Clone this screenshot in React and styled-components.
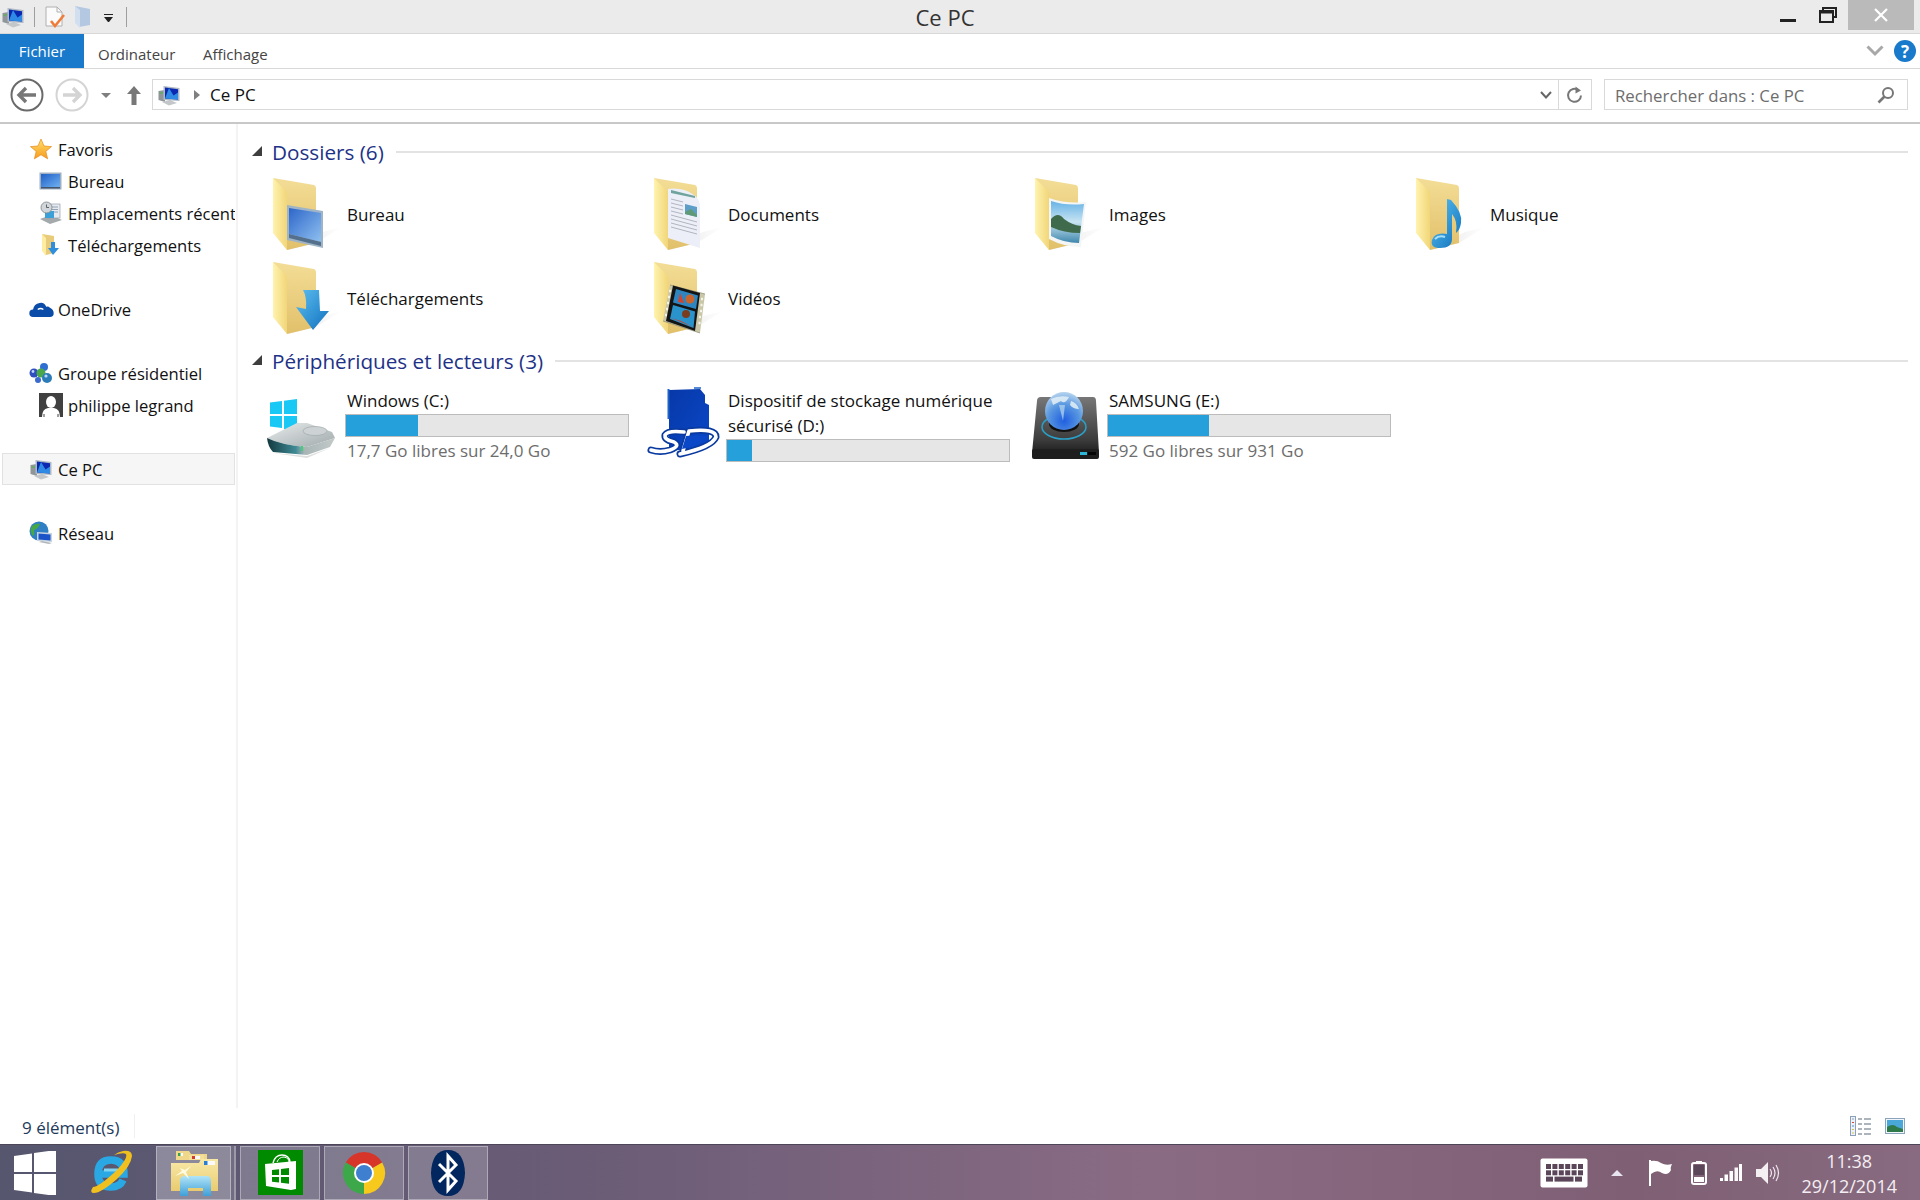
import React from 'react';
import styled, { createGlobalStyle } from 'styled-components';

function FolderBase({ id, children }) {
	return (
		<FolderSvg viewBox="0 0 72 84" width="72" height="84">
			<defs>
				<linearGradient id={`${id}b`} x1="0" y1="0" x2="0" y2="1">
					<stop offset="0" stopColor="#f3dd96" />
					<stop offset="1" stopColor="#e2c06a" />
				</linearGradient>
				<linearGradient id={`${id}f`} x1="0" y1="0" x2="1" y2="0">
					<stop offset="0" stopColor="#fff3ae" />
					<stop offset="1" stopColor="#f1d679" />
				</linearGradient>
				<linearGradient id={`${id}s`} x1="0" y1="0" x2="1" y2="0">
					<stop offset="0" stopColor="#cfcfcf" />
					<stop offset="1" stopColor="#ffffff" />
				</linearGradient>
			</defs>
			<path d="M15 73 L44 66 L70 50 L50 55 Z" fill={`url(#${id}s)`} opacity="0.55" />
			<path d="M1 1 L42 8 Q44 9 44 11 V66 L15 73 Z" fill={`url(#${id}b)`} />
			<path d="M1 1 L14 14 Q15 15 15 17 V73 L1 56 Z" fill={`url(#${id}f)`} />
			{children}
		</FolderSvg>
	);
}

function DesktopFolder() {
	return (
		<FolderBase id="fd">
			<defs>
				<linearGradient id="fdm" x1="0" y1="0" x2="1" y2="1">
					<stop offset="0" stopColor="#2d66c9" />
					<stop offset="1" stopColor="#8fc0f0" />
				</linearGradient>
			</defs>
			<path d="M15 28 L51 34 V71 L15 63 Z" fill="#9fb4c6" />
			<path d="M17 31 L49 36 V65 L17 57 Z" fill="url(#fdm)" />
			<path d="M17 57 L49 65 V69 L17 61 Z" fill="#54708c" />
		</FolderBase>
	);
}

function DocumentsFolder() {
	return (
		<FolderBase id="fc">
			<path d="M15 12 Q30 10 41 18 Q47 22 47 30 V71 L15 61 Z" fill="#eceef8" />
			<path d="M18 13 L42 19 V21 L18 16 Z" fill="#6fa39d" />
			<g stroke="#b2b4c0" strokeWidth="1">
				<path d="M18 22 L30 25 M18 26 L30 29 M18 30 L30 33 M18 34 L30 37 M18 38 L44 45 M18 42 L44 49 M18 46 L44 53 M18 50 L44 57" />
			</g>
			<path d="M32 27 L44 30 V40 L32 37 Z" fill="#5d9ec9" />
			<path d="M32 35 L38 32 L44 38 V40 L32 37 Z" fill="#5f9a78" />
		</FolderBase>
	);
}

function PicturesFolder() {
	return (
		<FolderBase id="fi">
			<defs>
				<linearGradient id="fip" x1="0" y1="0" x2="0" y2="1">
					<stop offset="0" stopColor="#66b2e6" />
					<stop offset="0.5" stopColor="#c8e4f2" />
					<stop offset="1" stopColor="#3f86ad" />
				</linearGradient>
			</defs>
			<path d="M15 21 Q32 27 52 25 L47 70 Q30 70 15 62 Z" fill="#f4f6f6" />
			<path d="M17 24 Q32 29 50 27 L45 66 Q30 66 17 59 Z" fill="url(#fip)" />
			<path d="M17 42 Q24 34 30 42 Q38 48 47 49 L46 56 Q30 56 17 50 Z" fill="#3f6a4c" />
		</FolderBase>
	);
}

function MusicFolder() {
	return (
		<FolderBase id="fm">
			<defs>
				<linearGradient id="fmn" x1="0" y1="0" x2="1" y2="1">
					<stop offset="0" stopColor="#5cc4f2" />
					<stop offset="1" stopColor="#0f6fbb" />
				</linearGradient>
			</defs>
			<path d="M32 22 L36 23 Q48 36 46 46 Q45 53 41 56 Q43 44 37 37 V62 Q37 71 25 71 Q15 71 17 63 Q20 55 32 57 Z" fill="url(#fmn)" />
			<path d="M20 62 Q24 58 30 60" stroke="#a8e0f8" strokeWidth="2" fill="none" />
		</FolderBase>
	);
}

function DownloadsFolder() {
	return (
		<FolderBase id="fl">
			<defs>
				<linearGradient id="fla" x1="0" y1="0" x2="1" y2="1">
					<stop offset="0" stopColor="#5fc0f0" />
					<stop offset="1" stopColor="#0f70c0" />
				</linearGradient>
			</defs>
			<path d="M31 29 L47 29 L48 50 L57 50 L41 69 L24 46 L34 48 Q35 36 31 29 Z" fill="url(#fla)" />
		</FolderBase>
	);
}

function VideosFolder() {
	return (
		<FolderBase id="fv">
			<path d="M17 24 L52 33 L47 72 L10 60 Z" fill="#c9c7a8" />
			<path d="M17 24 L52 33 M10 60 L47 72" stroke="#8a8870" strokeWidth="0.7" />
			<path d="M20 24.5 L47 32 L42 70 L13 60 Z" fill="#141414" />
			<path d="M16 30 L18 30 M15 36 L17 36 M14 42 L16 42 M13 48 L15 48 M12 54 L14 54 M48 38 L50 38 M47.5 44 L49.5 44 M47 50 L49 50 M46 56 L48 56 M45.5 62 L47.5 62" stroke="#f4f4e8" strokeWidth="2.4" />
			<path d="M23 28 L45 34.5 L43 48 L20 41.5 Z" fill="#2d86c2" />
			<path d="M20 44 L42 50.5 L40.5 67 L17 58 Z" fill="#2b93cc" />
			<circle cx="37" cy="38" r="4.5" fill="#c9642c" />
			<circle cx="33" cy="53" r="4" fill="#7a3d20" />
			<path d="M25 41 L27 32 L31 42 Z" fill="#d8402a" />
			<path d="M18 57 L28 60 L40 66 Z" fill="#c8402a" />
		</FolderBase>
	);
}

function WindowsDrive() {
	return (
		<DriveSvg viewBox="0 0 84 88" width="84" height="88">
			<defs>
				<linearGradient id="hddt" x1="0" y1="0" x2="1" y2="1">
					<stop offset="0" stopColor="#e8ecec" />
					<stop offset="1" stopColor="#a0a9ab" />
				</linearGradient>
				<linearGradient id="hddf" x1="0" y1="0" x2="1" y2="0">
					<stop offset="0" stopColor="#12383f" />
					<stop offset="0.42" stopColor="#3f8a94" />
					<stop offset="0.55" stopColor="#a9b5b5" />
					<stop offset="1" stopColor="#c2c9c9" />
				</linearGradient>
			</defs>
			<path d="M9 25.5 L21 24 V37 H9 Z M23 23.7 L36 22 V37 H23 Z M9 39 H21 V51 L9 49.5 Z M23 39 H36 V54 L23 52 Z" fill="#19c8f4" />
			<path d="M6 61 L36 46 H46 L71 55 L74 61 L46 70 Q20 68 6 61 Z" fill="url(#hddt)" />
			<path d="M6 61 Q20 68 46 70 L74 61 L69 70 L46 78 L12 75 Q7 70 6 61 Z" fill="url(#hddf)" />
			<ellipse cx="54" cy="54" rx="12" ry="4.5" fill="#cdd3d4" stroke="#9aa2a4" strokeWidth="0.6" />
			<rect x="40" y="69" width="2" height="5" fill="#3fd07a" />
			<path d="M12 76 L46 79 L69 71 L46 81 Z" fill="#c8c8c8" opacity="0.6" />
		</DriveSvg>
	);
}

function SdDrive() {
	return (
		<DriveSvg viewBox="0 0 84 88" width="84" height="88">
			<defs>
				<linearGradient id="sdc" x1="0" y1="0" x2="1" y2="1">
					<stop offset="0" stopColor="#0738a8" />
					<stop offset="1" stopColor="#0a48c8" />
				</linearGradient>
			</defs>
			<path d="M27 13 L58 12 L63 18 V26 L67 28 V70 L27 74 Z" fill="url(#sdc)" />
			<path d="M26.5 12 V42" stroke="#1f62c8" strokeWidth="2" fill="none" />
			<path d="M52 11 L59 11" stroke="#1f62c8" strokeWidth="1.5" />
			<g fill="none" strokeLinecap="round" strokeLinejoin="round">
				<path d="M42 55 Q26 53 23 58 Q22 63 32 65 Q39 69 28 73 Q18 76 9 73" stroke="#0a3aa0" strokeWidth="7" />
				<path d="M47 54 L41 74 M47 54 Q74 51 74 60 Q70 70 38 77" stroke="#0a3aa0" strokeWidth="7" />
				<path d="M42 55 Q26 53 23 58 Q22 63 32 65 Q39 69 28 73 Q18 76 9 73" stroke="#ffffff" strokeWidth="3.6" />
				<path d="M47 54 L41 74 M47 54 Q74 51 74 60 Q70 70 38 77" stroke="#ffffff" strokeWidth="3.6" />
			</g>
			<path d="M44 59 L40 72 Q60 68 66 60 Q62 57 44 59 Z" fill="#0a48c8" />
		</DriveSvg>
	);
}

function SamsungDrive() {
	return (
		<DriveSvg viewBox="0 0 84 88" width="84" height="88">
			<defs>
				<linearGradient id="sab" x1="0" y1="0" x2="0" y2="1">
					<stop offset="0" stopColor="#777777" />
					<stop offset="0.7" stopColor="#3b3b3b" />
					<stop offset="1" stopColor="#111111" />
				</linearGradient>
				<radialGradient id="sag" cx="0.5" cy="0.75" r="0.85">
					<stop offset="0" stopColor="#1f5ee0" />
					<stop offset="0.5" stopColor="#5a98e0" />
					<stop offset="1" stopColor="#d2e6f2" />
				</radialGradient>
			</defs>
			<path d="M14 24 Q14 20 18 20 H70 Q73 20 73 24 L76 76 Q76 82 72 82 H14 Q9 82 9 76 Z" fill="url(#sab)" />
			<rect x="9" y="72" width="67" height="10" rx="2" fill="#1e1e1e" />
			<ellipse cx="41" cy="50" rx="22" ry="12" fill="none" stroke="#2aa0c8" strokeWidth="1.5" />
			<ellipse cx="41" cy="47" rx="15" ry="8" fill="#101010" />
			<circle cx="41" cy="34" r="19" fill="url(#sag)" />
			<path d="M28 22 Q36 18 46 20 Q42 28 38 24 Q34 26 30 28 Z M48 24 Q54 26 56 32 Q50 32 47 28 Z" fill="#e4f0f6" opacity="0.85" />
			<path d="M36 28 L42 28 L40 44 Z" fill="#b8d8f0" opacity="0.7" />
			<rect x="57" y="75" width="7" height="3" fill="#2cb8d8" />
			<rect x="65" y="75" width="8" height="3" fill="#050505" />
		</DriveSvg>
	);
}

function PcIcon({ size = 22 }) {
	return (
		<svg viewBox="0 0 22 22" width={size} height={size}>
			<path d="M0.5 7 L7 6 V18 L0.5 16 Z" fill="#8f9598" />
			<path d="M1.5 8.5 L5 8 V9.5 L1.5 10 Z" fill="#5fb05f" />
			<path d="M4 18 L11 21.5 L19 19 L12 16 Z" fill="#c3c7c9" />
			<path d="M5.5 2 L21.5 4 V17 L5.5 16 Z" fill="#aeb9c4" />
			<path d="M7 3.5 L20 5.2 V15.5 L7 14.5 Z" fill="#0a28b0" />
			<path d="M11 4 L15.5 11.5 L20 8.5 V15.5 L7 14.5 Z" fill="#2f8ae6" />
		</svg>
	);
}

function StarIcon() {
	return (
		<svg viewBox="0 0 22 22" width="22" height="22">
			<defs>
				<linearGradient id="star" x1="0" y1="0" x2="0" y2="1">
					<stop offset="0" stopColor="#ffe06a" />
					<stop offset="1" stopColor="#f79a1e" />
				</linearGradient>
			</defs>
			<path d="M11 1 L14 8 L21.5 8.6 L15.8 13.4 L17.6 20.8 L11 16.8 L4.4 20.8 L6.2 13.4 L0.5 8.6 L8 8 Z" fill="url(#star)" stroke="#e58a1a" strokeWidth="0.7" />
		</svg>
	);
}

function DesktopIcon() {
	return (
		<svg viewBox="0 0 24 22" width="24" height="22">
			<defs>
				<linearGradient id="desk" x1="0" y1="0" x2="1" y2="1">
					<stop offset="0" stopColor="#1e5fc8" />
					<stop offset="1" stopColor="#6fb0f0" />
				</linearGradient>
			</defs>
			<rect x="0.5" y="2.5" width="22" height="17" fill="#9fb0c2" />
			<rect x="2" y="4" width="19" height="13" fill="url(#desk)" />
			<rect x="2" y="17" width="19" height="1.5" fill="#44546a" />
		</svg>
	);
}

function RecentIcon() {
	return (
		<svg viewBox="0 0 24 24" width="24" height="24">
			<path d="M1 18 L12 14 L23 19 L11 23 Z" fill="#a4a9ac" />
			<rect x="9" y="3" width="12" height="14" fill="#e4eaf0" stroke="#98a0a8" strokeWidth="0.7" />
			<path d="M11 6 H19 M11 8.5 H19 M11 11 H19" stroke="#7e90a0" strokeWidth="0.8" />
			<rect x="6" y="10" width="9" height="7" fill="#3aa0d8" />
			<circle cx="7.5" cy="6.5" r="5.5" fill="#d0d6da" stroke="#7b8286" strokeWidth="0.8" />
			<path d="M7.5 3.5 V6.5 H10" stroke="#555555" strokeWidth="0.9" fill="none" />
		</svg>
	);
}

function SmallDownloadsIcon() {
	return (
		<svg viewBox="0 0 22 24" width="22" height="24">
			<path d="M2 1 L14 3 V20 L6 22 Z" fill="#e8cb7b" />
			<path d="M2 1 L6 5 V23 L2 18 Z" fill="#fdeda0" />
			<path d="M11 9 H15 V15 H19 L13 22 L8 15 H11 Z" fill="#2f8fdc" />
		</svg>
	);
}

function CloudIcon() {
	return (
		<svg viewBox="0 0 26 16" width="25" height="15">
			<path d="M4 16 Q0 16 0 12 Q0 8 4 8 Q5 2 11 1 Q16 0 18 5 Q20 4 22 6 Q26 8 26 12 Q26 16 22 16 Z" fill="#0b4ca8" />
			<path d="M9 8 Q12 6 15 8" stroke="#ffffff" strokeWidth="1.5" fill="none" />
		</svg>
	);
}

function HomegroupIcon() {
	return (
		<svg viewBox="0 0 24 22" width="24" height="22">
			<circle cx="15" cy="5" r="4" fill="#2f6fd0" />
			<circle cx="5" cy="11" r="4.5" fill="#2f4fc0" />
			<circle cx="12" cy="11" r="4.5" fill="#4aa84a" />
			<circle cx="18" cy="16" r="5" fill="#2c7cb8" />
			<circle cx="9" cy="18" r="3" fill="#3a6ad0" />
			<circle cx="4" cy="9.5" r="1.4" fill="#bcd6f8" />
			<circle cx="17" cy="14" r="1.6" fill="#bcd6f8" />
		</svg>
	);
}

function UserIcon() {
	return (
		<svg viewBox="0 0 24 24" width="24" height="24">
			<rect width="24" height="24" fill="#404040" />
			<ellipse cx="12" cy="9" rx="5" ry="6" fill="#ffffff" />
			<path d="M3 24 Q3 16 9 15 H15 Q21 16 21 24 Z" fill="#ffffff" />
			<path d="M5 24 V21 M19 24 V21" stroke="#404040" />
		</svg>
	);
}

function NetworkIcon() {
	return (
		<svg viewBox="0 0 24 24" width="24" height="24">
			<circle cx="10" cy="10" r="9.5" fill="#2f7fc4" />
			<path d="M3 5 Q7 2 11 3 Q9 8 5 9 Q6 14 4 15 Q0 10 3 5 Z" fill="#45a845" />
			<path d="M8 11 L23 12 V21 L8 20 Z" fill="#c8d4e0" />
			<path d="M9.5 12.5 L21.5 13.4 V19.5 L9.5 18.6 Z" fill="#1a54c8" />
			<path d="M10 21 L20 23 L23 22 L13 20 Z" fill="#b0b6ba" />
		</svg>
	);
}

function DocCheckIcon() {
	return (
		<svg viewBox="0 0 20 22" width="20" height="22">
			<path d="M1 1 H12 L17 6 V20 H1 Z" fill="#fbfbfb" stroke="#b0b0b0" />
			<path d="M12 1 V6 H17" fill="none" stroke="#b0b0b0" />
			<path d="M6 15 L10 20 L19 9" fill="none" stroke="#ee7d3b" strokeWidth="2.6" />
		</svg>
	);
}

function PaleFolderIcon() {
	return (
		<svg viewBox="0 0 18 23" width="18" height="23">
			<path d="M1 1 L16 4 V20 L5 22 Z" fill="#b4c8e2" />
			<path d="M1 1 L6 5 V23 L1 18 Z" fill="#d2dff0" />
		</svg>
	);
}

function CircleArrow({ faded }) {
	const colour = faded ? '#d4d4d4' : '#6a6a6a';
	const arrow = faded ? '#d4d4d4' : '#777777';
	return (
		<svg viewBox="0 0 34 34" width="34" height="34">
			<circle cx="17" cy="17" r="15.5" fill="none" stroke={colour} strokeWidth="2" />
			{faded
				? <path d="M8 17 H24 M18 10 L25 17 L18 24" fill="none" stroke={arrow} strokeWidth="3.4" />
				: <path d="M26 17 H10 M16 10 L9 17 L16 24" fill="none" stroke={arrow} strokeWidth="3.4" />}
		</svg>
	);
}

function RefreshIcon() {
	return (
		<svg viewBox="0 0 18 18" width="18" height="18">
			<path d="M12.5 4.2 A6.5 6.5 0 1 0 15 9.5" fill="none" stroke="#777777" strokeWidth="2" />
			<path d="M9.5 0.5 L15 4.5 L9.5 7.5 Z" fill="#777777" />
		</svg>
	);
}

function SearchGlass() {
	return (
		<svg viewBox="0 0 18 18" width="18" height="18">
			<circle cx="11" cy="7" r="5" fill="none" stroke="#777777" strokeWidth="2" />
			<path d="M7.5 10.5 L1.5 16.5" stroke="#777777" strokeWidth="2.6" />
		</svg>
	);
}

function StartLogo() {
	return (
		<svg viewBox="0 0 44 44" width="44" height="44">
			<path d="M1 5 L19 2.4 V21 H1 Z M21 2 L43 -1 V21 H21 Z M1 23 H19 V41.6 L1 39 Z M21 23 H43 V45 L21 42 Z" fill="#ffffff" />
		</svg>
	);
}

function IeLogo() {
	return (
		<svg viewBox="0 0 48 48" width="48" height="48">
			<path d="M11 25 H37 Q37 11 24 11 Q11 11 11 25 Q11 38 24 38 Q33 38 36 31" fill="none" stroke="#2aa8e4" strokeWidth="7.5" />
			<path d="M17 21 H31" stroke="#7fd4f4" strokeWidth="3" />
			<path d="M6 38 Q2 44 7 44 Q14 44 30 30 Q44 17 45 7 Q45 1 36 2 Q31 3 27 6 Q36 3 39 5 Q41 9 30 21 Q12 38 6 38 Z" fill="#f0c020" />
		</svg>
	);
}

function ExplorerLogo() {
	return (
		<svg viewBox="0 0 50 50" width="50" height="50">
			<defs>
				<linearGradient id="exf" x1="0" y1="0" x2="0" y2="1">
					<stop offset="0" stopColor="#f8e9a8" />
					<stop offset="1" stopColor="#e8cb70" />
				</linearGradient>
				<linearGradient id="exb" x1="0" y1="0" x2="0" y2="1">
					<stop offset="0" stopColor="#b0e4f6" />
					<stop offset="1" stopColor="#3f9fd8" />
				</linearGradient>
			</defs>
			<path d="M7 3 H20 L22 6 H38 V12 H7 Z" fill="#f0d88a" />
			<rect x="9" y="5" width="5" height="3" fill="#fafafa" />
			<rect x="9" y="5" width="2.5" height="3" fill="#3aa04a" />
			<path d="M20 7 H35 V12 H20 Z" fill="#f4e09a" />
			<rect x="23" y="8" width="8" height="3" fill="#fafafa" />
			<rect x="23" y="8" width="3" height="3" fill="#d83a2a" />
			<path d="M2 15 H30 L32 11 H49 V43 H2 Z" fill="url(#exf)" />
			<rect x="35" y="13" width="11" height="4" fill="#fafafa" />
			<rect x="35" y="13" width="3.5" height="4" fill="#2a7fd0" />
			<path d="M11 48 V33 Q11 28 16 28 H38 Q42 28 42 33 V48 H34 V40 H19 V48 Z" fill="url(#exb)" />
			<path d="M11 20 L16 22 L22 18 L17 24 L20 31 L14 25 L6 28 L13 23 Z" fill="#fffbe0" />
		</svg>
	);
}

function StoreLogo() {
	return (
		<svg viewBox="0 0 45 45" width="45" height="45">
			<rect width="45" height="45" fill="#008a00" />
			<path d="M15 13 Q17 5 24 5 Q31 5 32 12" fill="none" stroke="#ffffff" strokeWidth="1.4" />
			<path d="M19 12 Q21 7 26 7 Q31 8 31 12" fill="none" stroke="#ffffff" strokeWidth="1" />
			<path d="M7 14 L38 11 V39 L33 40 L8 36 Z" fill="#ffffff" />
			<path d="M14 20 L21 19.2 V25 H14 Z M23 19 L31 18 V25 H23 Z M14 27 H21 V32.6 L14 31.8 Z M23 27 H31 V33.8 L23 32.8 Z" fill="#008a00" />
		</svg>
	);
}

function ChromeLogo() {
	return (
		<svg viewBox="0 0 44 44" width="44" height="44">
			<path d="M22 22 L3.8 11.5 A21 21 0 0 1 40.2 11.5 Z" fill="#d8352a" />
			<path d="M22 22 L40.2 11.5 A21 21 0 0 1 22 43 Z" fill="#f6c91c" />
			<path d="M22 22 L22 43 A21 21 0 0 1 3.8 11.5 Z" fill="#3da84a" />
			<circle cx="22" cy="22" r="10" fill="#ffffff" />
			<circle cx="22" cy="22" r="8" fill="#3f7fd0" />
		</svg>
	);
}

function BluetoothLogo() {
	return (
		<svg viewBox="0 0 36 46" width="36" height="46">
			<path d="M18 0 Q34 0 35 23 Q34 46 18 46 Q2 46 1 23 Q2 0 18 0 Z" fill="#02265e" />
			<path d="M9 14 L26 31 L18 40 V6 L26 15 L9 32" fill="none" stroke="#ffffff" strokeWidth="3" />
		</svg>
	);
}

function KeyboardIcon() {
	const keys = [];
	for (let row = 0; row < 2; row++) {
		for (let col = 0; col < 6; col++) {
			keys.push(<rect key={`${row}-${col}`} x={6 + col * 6.4} y={6 + row * 6.3} width="5" height="5" fill="#5a4658" />);
		}
	}
	return (
		<svg viewBox="0 0 48 30" width="48" height="30">
			<rect x="0.5" y="0.5" width="47" height="29" rx="2" fill="#ffffff" />
			{keys}
			<rect x="6" y="18.6" width="7" height="5" fill="#5a4658" />
			<rect x="14.5" y="18.6" width="19" height="5" fill="#5a4658" />
			<rect x="35" y="18.6" width="7" height="5" fill="#5a4658" />
		</svg>
	);
}

function FlagIcon() {
	return (
		<svg viewBox="0 0 24 28" width="24" height="28">
			<path d="M1 1 V27" stroke="#ffffff" strokeWidth="2" />
			<path d="M2 2 Q8 1 12 4 Q17 7 23 5 Q21 9 22 11 Q19 17 13 14 Q8 10 2 15 Z" fill="#ffffff" />
		</svg>
	);
}

function BatteryIcon() {
	return (
		<svg viewBox="0 0 16 24" width="16" height="24">
			<rect x="5" y="0" width="6" height="2.5" fill="#ffffff" />
			<rect x="1" y="2" width="14" height="21" rx="2" fill="none" stroke="#ffffff" strokeWidth="2" />
			<rect x="3" y="4" width="10" height="10" fill="#5a4658" />
			<rect x="3" y="16" width="10" height="5" fill="#ffffff" />
		</svg>
	);
}

function SignalIcon() {
	return (
		<svg viewBox="0 0 22 18" width="22" height="18">
			<rect x="0" y="14" width="3" height="3" fill="#ffffff" />
			<rect x="4.5" y="10.5" width="3.5" height="6.5" fill="#ffffff" />
			<rect x="9.5" y="7" width="3.5" height="10" fill="#ffffff" />
			<rect x="14.5" y="3.5" width="3.5" height="13.5" fill="#ffffff" fillOpacity="0.95" />
			<rect x="19" y="0" width="3" height="17" fill="#ffffff" />
		</svg>
	);
}

function VolumeIcon() {
	return (
		<svg viewBox="0 0 24 24" width="24" height="24">
			<path d="M0 8 H5 L12 1 V23 L5 16 H0 Z" fill="#f4f0f2" />
			<path d="M14 8 Q17 12 14 16 M17 6 Q21 12 17 18 M20 4 Q25 12 20 20" fill="none" stroke="#f0e8ee" strokeWidth="1.2" />
		</svg>
	);
}

function DetailsViewIcon() {
	return (
		<svg viewBox="0 0 22 20" width="22" height="20">
			<rect x="0.5" y="0.5" width="5" height="19" fill="#eef2f6" stroke="#8aa0b8" />
			<path d="M2 3 H4" stroke="#8aa0b8" />
			<path d="M2 6.5 H4" stroke="#d84a3a" />
			<path d="M2 10 H4" stroke="#4a90d0" />
			<path d="M2 13.5 H4" stroke="#d8c24a" />
			<path d="M2 17 H4" stroke="#d8c24a" />
			<path d="M8 3 H12 M14 3 H21 M8 8 H12 M14 8 H21 M8 13 H12 M14 13 H21 M8 18 H12 M14 18 H21" stroke="#5e6a78" strokeWidth="1.2" />
		</svg>
	);
}

function TilesViewIcon() {
	return (
		<svg viewBox="0 0 20 16" width="20" height="16">
			<rect x="0.5" y="0.5" width="19" height="15" fill="#f2f6fa" stroke="#8aa4bc" />
			<rect x="2" y="2" width="16" height="12" fill="#4aa8d8" />
			<path d="M2 9 Q8 5 12 9 L18 11 V14 H2 Z" fill="#2f7a4a" />
		</svg>
	);
}

const favourites = [
	{ label: 'Bureau', icon: <DesktopIcon /> },
	{ label: 'Emplacements récents', icon: <RecentIcon /> },
	{ label: 'Téléchargements', icon: <SmallDownloadsIcon /> },
];

const folders = [
	{ label: 'Bureau', icon: <DesktopFolder /> },
	{ label: 'Documents', icon: <DocumentsFolder /> },
	{ label: 'Images', icon: <PicturesFolder /> },
	{ label: 'Musique', icon: <MusicFolder /> },
	{ label: 'Téléchargements', icon: <DownloadsFolder /> },
	{ label: 'Vidéos', icon: <VideosFolder /> },
];

const drives = [
	{ name: 'Windows (C:)', used: 25.5, free: '17,7 Go libres sur 24,0 Go', icon: <WindowsDrive /> },
	{ name: 'Dispositif de stockage numérique sécurisé (D:)', used: 9, icon: <SdDrive /> },
	{ name: 'SAMSUNG (E:)', used: 35.8, free: '592 Go libres sur 931 Go', icon: <SamsungDrive /> },
];

const SectionHeader = ({ title }) => (
	<Header>
		<Collapse />
		<HeaderTitle>{title}</HeaderTitle>
		<HeaderLine />
	</Header>
);

const App = () => {
	return (
		<Page>
			<GlobalStyle />
			<TitleBar>
				<QuickAccess>
					<PcIcon />
					<QuickSep />
					<DocCheckIcon />
					<PaleFolderIcon />
					<QuickDropdown />
					<QuickSep />
				</QuickAccess>
				<WindowTitle>Ce PC</WindowTitle>
				<WindowButtons>
					<MinButton />
					<MaxButton>
						<svg viewBox="0 0 18 16" width="18" height="16">
							<path d="M4 3 V1 H17 V10 H14" fill="none" stroke="#222222" strokeWidth="2" />
							<rect x="1" y="4" width="13" height="11" fill="none" stroke="#222222" strokeWidth="2" />
							<path d="M1 5.5 H14" stroke="#222222" strokeWidth="2" />
						</svg>
					</MaxButton>
					<CloseButton>
						<svg viewBox="0 0 14 14" width="14" height="14">
							<path d="M1 1 L13 13 M13 1 L1 13" stroke="#ffffff" strokeWidth="2.2" />
						</svg>
					</CloseButton>
				</WindowButtons>
			</TitleBar>

			<RibbonTabs>
				<FileTab>Fichier</FileTab>
				<RibbonTab>Ordinateur</RibbonTab>
				<RibbonTab>Affichage</RibbonTab>
				<RibbonRight>
					<svg viewBox="0 0 18 12" width="18" height="12">
						<path d="M1.5 1.5 L9 9 L16.5 1.5" fill="none" stroke="#a8a8a8" strokeWidth="3" />
					</svg>
					<HelpBadge>?</HelpBadge>
				</RibbonRight>
			</RibbonTabs>

			<NavBar>
				<NavArrows>
					<CircleArrow />
					<CircleArrow faded />
					<HistoryCaret />
					<svg viewBox="0 0 16 20" width="16" height="20">
						<path d="M8 1 L15 9 H10.5 V20 H5.5 V9 H1 Z" fill="#777777" />
					</svg>
				</NavArrows>
				<AddressBox>
					<PcIcon />
					<Breadcrumb />
					<AddressText>Ce PC</AddressText>
					<AddressTools>
						<svg viewBox="0 0 12 8" width="12" height="8">
							<path d="M1 1 L6 6.5 L11 1" fill="none" stroke="#666666" strokeWidth="2" />
						</svg>
						<RefreshCell>
							<RefreshIcon />
						</RefreshCell>
					</AddressTools>
				</AddressBox>
				<SearchBox>
					<SearchHint>Rechercher dans : Ce PC</SearchHint>
					<SearchGlass />
				</SearchBox>
			</NavBar>

			<Main>
				<Sidebar>
					<SideGroup>
						<SideRow><SideIcon><StarIcon /></SideIcon>Favoris</SideRow>
						{favourites.map(item => (
							<SideRow key={item.label} $nested>
								<SideIcon>{item.icon}</SideIcon>
								{item.label}
							</SideRow>
						))}
					</SideGroup>
					<SideGroup>
						<SideRow><SideIcon><CloudIcon /></SideIcon>OneDrive</SideRow>
					</SideGroup>
					<SideGroup>
						<SideRow><SideIcon><HomegroupIcon /></SideIcon>Groupe résidentiel</SideRow>
						<SideRow $nested><SideIcon><UserIcon /></SideIcon>philippe legrand</SideRow>
					</SideGroup>
					<SideGroup>
						<SideRow $selected><SideIcon><PcIcon /></SideIcon>Ce PC</SideRow>
					</SideGroup>
					<SideGroup>
						<SideRow><SideIcon><NetworkIcon /></SideIcon>Réseau</SideRow>
					</SideGroup>
				</Sidebar>

				<Content>
					<SectionHeader title="Dossiers (6)" />
					<ItemGrid $spaced>
						{folders.map(folder => (
							<FolderItem key={folder.label}>
								<IconCell>{folder.icon}</IconCell>
								<FolderLabel>{folder.label}</FolderLabel>
							</FolderItem>
						))}
					</ItemGrid>
					<SectionHeader title="Périphériques et lecteurs (3)" />
					<ItemGrid>
						{drives.map(drive => (
							<DriveItem key={drive.name}>
								<DriveIconCell>{drive.icon}</DriveIconCell>
								<DriveInfo>
									<DriveName>{drive.name}</DriveName>
									<UsageBar>
										<UsageFill style={{ width: `${drive.used}%` }} />
									</UsageBar>
									{drive.free && <DriveFree>{drive.free}</DriveFree>}
								</DriveInfo>
							</DriveItem>
						))}
					</ItemGrid>
				</Content>
			</Main>

			<StatusBar>
				<StatusCount>9 élément(s)</StatusCount>
				<ViewToggles>
					<DetailsViewIcon />
					<TilesViewIcon />
				</ViewToggles>
			</StatusBar>

			<Taskbar>
				<StartCell><StartLogo /></StartCell>
				<PlainApp><IeLogo /></PlainApp>
				<ExplorerButton>
					<TaskButton $wide><ExplorerLogo /></TaskButton>
				</ExplorerButton>
				<TaskButton><StoreLogo /></TaskButton>
				<TaskButton><ChromeLogo /></TaskButton>
				<TaskButton><BluetoothLogo /></TaskButton>
				<Tray>
					<TrayItem><KeyboardIcon /></TrayItem>
					<TrayItem $gap={23}><TrayCaret /></TrayItem>
					<TrayItem $gap={26}><FlagIcon /></TrayItem>
					<TrayItem $gap={18}><BatteryIcon /></TrayItem>
					<TrayItem $gap={13}><SignalIcon /></TrayItem>
					<TrayItem $gap={14}><VolumeIcon /></TrayItem>
					<Clock>
						<span>11:38</span>
						<span>29/12/2014</span>
					</Clock>
				</Tray>
			</Taskbar>
		</Page>
	);
};

export default App;

const GlobalStyle = createGlobalStyle`
	html, body {
		margin: 0;
		padding: 0;
		background: #ffffff;
	}
	* {
		box-sizing: border-box;
	}
	svg {
		display: block;
		flex-shrink: 0;
	}
`;

const Page = styled.div`
	display: flex;
	flex-direction: column;
	width: 1920px;
	height: 1200px;
	overflow: hidden;
	background: #ffffff;
	color: #111111;
	font-family: "Open Sans", "Noto Sans", sans-serif;
	font-size: 17px;
`;

const TitleBar = styled.div`
	position: relative;
	display: flex;
	justify-content: space-between;
	align-items: flex-start;
	height: 34px;
	background: #ebebeb;
	border-bottom: 1px solid #d8d8d8;
`;

const QuickAccess = styled.div`
	display: flex;
	align-items: center;
	gap: 9px;
	height: 33px;
	padding-left: 2px;
`;

const QuickSep = styled.div`
	width: 1px;
	height: 20px;
	margin: 0 1px;
	background: #9e9e9e;
`;

const QuickDropdown = styled.div`
	width: 9px;
	height: 8px;
	margin: 2px 3px 0;
	border-top: 1px solid #222222;
	&::after {
		content: '';
		display: block;
		margin-top: 2px;
		border-left: 4.5px solid transparent;
		border-right: 4.5px solid transparent;
		border-top: 5px solid #222222;
	}
`;

const WindowTitle = styled.div`
	position: absolute;
	left: 0;
	right: 30px;
	top: 2px;
	text-align: center;
	font-size: 22px;
	line-height: 30px;
	color: #333333;
`;

const WindowButtons = styled.div`
	display: flex;
	align-items: flex-start;
	padding-right: 6px;
`;

const MinButton = styled.div`
	width: 16px;
	height: 3px;
	margin-top: 19px;
	margin-right: 23px;
	background: #222222;
`;

const MaxButton = styled.div`
	width: 18px;
	margin-top: 7px;
	margin-right: 11px;
`;

const CloseButton = styled.div`
	display: flex;
	align-items: center;
	justify-content: center;
	width: 66px;
	height: 30px;
	background: #bababa;
`;

const RibbonTabs = styled.div`
	display: flex;
	align-items: stretch;
	height: 35px;
	border-bottom: 1px solid #d9d9d9;
`;

const FileTab = styled.div`
	display: flex;
	align-items: center;
	justify-content: center;
	width: 84px;
	background: #1979ca;
	color: #ffffff;
	font-size: 15px;
`;

const RibbonTab = styled.div`
	display: flex;
	align-items: center;
	padding: 5px 13.5px 0 14px;
	color: #444444;
	font-size: 15px;
`;

const RibbonRight = styled.div`
	display: flex;
	align-items: center;
	gap: 10px;
	margin-left: auto;
	padding-right: 4px;
`;

const HelpBadge = styled.div`
	display: flex;
	align-items: center;
	justify-content: center;
	width: 22px;
	height: 22px;
	border-radius: 50%;
	background: #1979ca;
	color: #ffffff;
	font-size: 17px;
	font-weight: 700;
`;

const NavBar = styled.div`
	display: flex;
	align-items: center;
	gap: 12px;
	height: 55px;
	padding: 10px 12px 12px 10px;
	border-bottom: 2px solid #c8c8c8;
`;

const NavArrows = styled.div`
	display: flex;
	align-items: center;
	width: 130px;
	gap: 11px;
`;

const HistoryCaret = styled.div`
	width: 0;
	height: 0;
	margin: 2px 4px 0 1px;
	border-left: 5px solid transparent;
	border-right: 5px solid transparent;
	border-top: 5px solid #7f7f7f;
`;

const AddressBox = styled.div`
	display: flex;
	align-items: center;
	width: 1440px;
	height: 31px;
	padding-left: 5px;
	border: 1px solid #d9d9d9;
`;

const Breadcrumb = styled.div`
	width: 0;
	height: 0;
	margin-left: 14px;
	margin-right: 10px;
	border-top: 5px solid transparent;
	border-bottom: 5px solid transparent;
	border-left: 6px solid #7f7f7f;
`;

const AddressText = styled.span`
	font-size: 17px;
`;

const AddressTools = styled.div`
	display: flex;
	align-items: center;
	height: 100%;
	gap: 6px;
	margin-left: auto;
`;

const RefreshCell = styled.div`
	display: flex;
	align-items: center;
	justify-content: center;
	width: 33px;
	height: 100%;
	border-left: 1px solid #d9d9d9;
`;

const SearchBox = styled.div`
	display: flex;
	align-items: center;
	justify-content: space-between;
	flex: 1;
	height: 31px;
	padding: 0 12px 0 10px;
	border: 1px solid #d9d9d9;
`;

const SearchHint = styled.span`
	padding-top: 2px;
	color: #6d6d6d;
	font-size: 16.8px;
`;

const Main = styled.div`
	display: flex;
	flex: 1;
	min-height: 0;
`;

const Sidebar = styled.nav`
	width: 238px;
	padding-top: 9px;
	padding-right: 1px;
	border-right: 2px solid #f3f3f3;
	overflow: hidden;
`;

const SideGroup = styled.div`
	margin-bottom: 32px;
`;

const SideRow = styled.div`
	display: flex;
	align-items: center;
	height: 32px;
	margin-left: ${p => (p.$selected ? '2px' : '0')};
	padding-left: ${p => (p.$nested ? '39px' : p.$selected ? '26px' : '29px')};
	border: ${p => (p.$selected ? '1px solid #e2e2e2' : 'none')};
	background: ${p => (p.$selected ? '#f6f6f6' : 'transparent')};
	white-space: nowrap;
	overflow: hidden;
	font-size: 16.6px;
`;

const SideIcon = styled.span`
	display: flex;
	align-items: center;
	justify-content: center;
	flex-shrink: 0;
	width: 24px;
	margin-right: 5px;
`;

const Content = styled.main`
	flex: 1;
	padding: 12px 12px 0 14px;
`;

const Header = styled.div`
	display: flex;
	align-items: center;
	height: 32px;
`;

const Collapse = styled.div`
	width: 0;
	height: 0;
	margin-top: -2px;
	margin-right: 10px;
	border-left: 10px solid transparent;
	border-bottom: 10px solid #3e3e3e;
`;

const HeaderTitle = styled.span`
	color: #1e3287;
	font-size: 20.7px;
`;

const HeaderLine = styled.div`
	flex: 1;
	height: 2px;
	margin-left: 12px;
	background: #e3e3e3;
`;

const ItemGrid = styled.div`
	display: grid;
	grid-template-columns: repeat(4, 381px);
	margin-left: 9px;
	margin-top: ${p => (p.$spaced ? '9px' : '0')};
`;

const FolderItem = styled.div`
	display: flex;
	align-items: center;
	height: 84px;
`;

const IconCell = styled.div`
	width: 84px;
	padding-left: 11px;
`;

const FolderSvg = styled.svg``;

const DriveSvg = styled.svg``;

const FolderLabel = styled.span`
	margin-bottom: 10px;
	padding-left: 2px;
`;

const DriveItem = styled.div`
	display: flex;
	align-items: flex-start;
	height: 88px;
`;

const DriveIconCell = styled.div`
	width: 84px;
`;

const DriveInfo = styled.div`
	width: 284px;
	padding-top: 11px;
`;

const DriveName = styled.div`
	padding: 0 0 1px 2px;
	line-height: 25px;
`;

const UsageBar = styled.div`
	height: 23px;
	border: 1px solid #bcbcbc;
	background: #e6e6e6;
`;

const UsageFill = styled.div`
	height: 100%;
	background: #26a0da;
`;

const DriveFree = styled.div`
	padding-left: 2px;
	line-height: 28px;
	color: #6d6d6d;
`;

const StatusBar = styled.div`
	display: flex;
	align-items: center;
	justify-content: space-between;
	height: 36px;
	padding: 0 15px 0 22px;
`;

const StatusCount = styled.div`
	display: flex;
	align-items: center;
	width: 113px;
	height: 24px;
	padding-top: 3px;
	border-right: 1px solid #f0f0f0;
	color: #1e3a5a;
`;

const ViewToggles = styled.div`
	display: flex;
	align-items: center;
	gap: 13px;
`;

const Taskbar = styled.footer`
	display: flex;
	align-items: center;
	gap: 4px;
	height: 56px;
	background: linear-gradient(90deg, #56566f, #6a5c76 30%, #8a6b84 60%, #7e5f74 85%, #886b80);
	border-top: 1px solid #4c4658;
`;

const StartCell = styled.div`
	display: flex;
	align-items: center;
	justify-content: center;
	width: 70px;
`;

const PlainApp = styled.div`
	display: flex;
	align-items: center;
	justify-content: center;
	width: 78px;
	padding-right: 4px;
`;

const ExplorerButton = styled.div`
	display: flex;
	width: 80px;
	height: 54px;
	padding-right: 3px;
	border-right: 2px solid rgba(255, 255, 255, 0.3);
	background: rgba(255, 255, 255, 0.12);
`;

const TaskButton = styled.div`
	display: flex;
	align-items: center;
	justify-content: center;
	width: ${p => (p.$wide ? '75px' : '80px')};
	height: 54px;
	border: 1px solid rgba(255, 255, 255, 0.35);
	background: rgba(255, 255, 255, 0.2);
`;

const Tray = styled.div`
	display: flex;
	align-items: center;
	margin-left: auto;
	padding-right: 23px;
`;

const TrayItem = styled.div`
	margin-left: ${p => p.$gap || 0}px;
`;

const TrayCaret = styled.div`
	width: 0;
	height: 0;
	border-left: 6px solid transparent;
	border-right: 6px solid transparent;
	border-bottom: 6px solid #e8e4f0;
`;

const Clock = styled.div`
	display: flex;
	flex-direction: column;
	align-items: center;
	margin-left: 21px;
	padding-top: 2px;
	color: #f4eef2;
	font-size: 18px;
	line-height: 25px;
`;
